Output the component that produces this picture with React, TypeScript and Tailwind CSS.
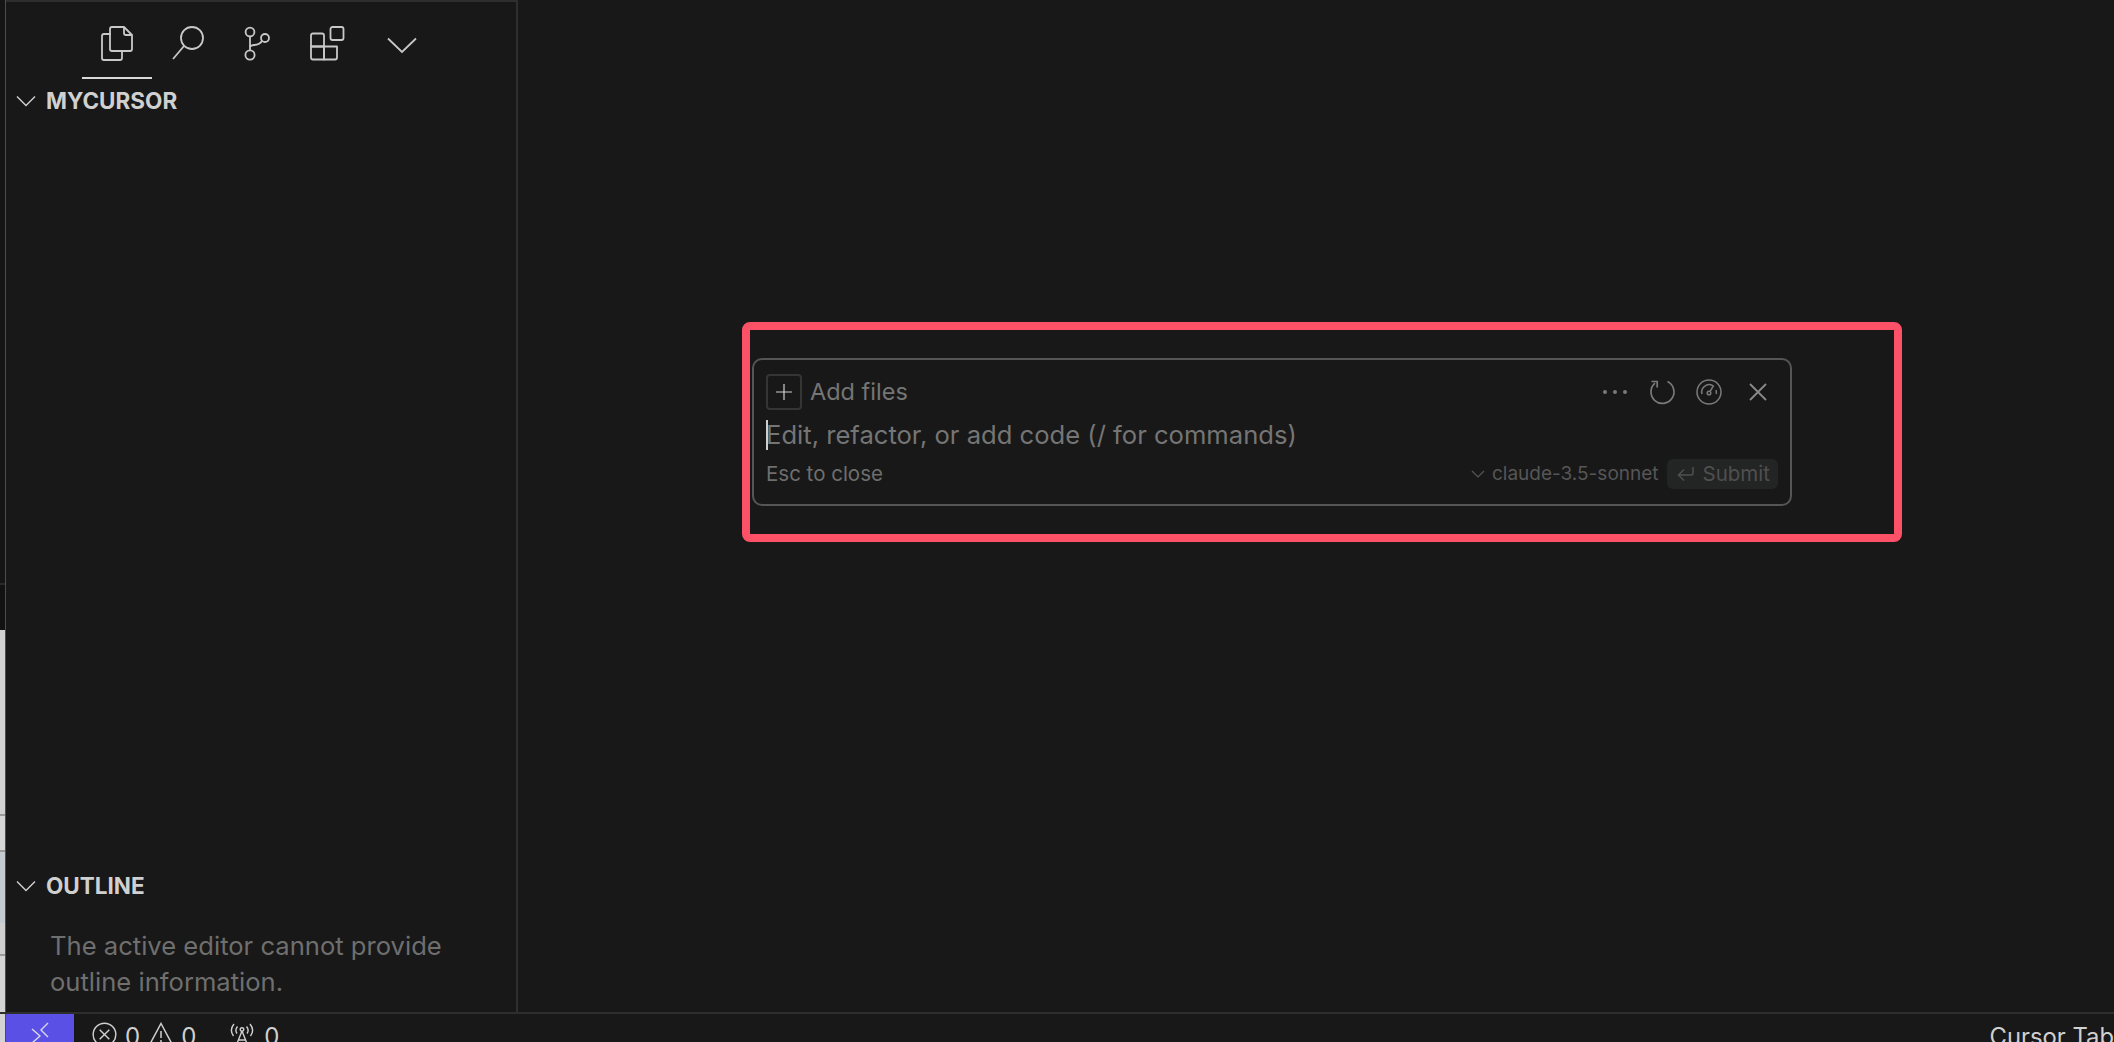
import React from "react";

const font = { fontFamily: 'Inter, "Liberation Sans", sans-serif' };

function Chevron({ className = "" }: { className?: string }) {
  return (
    <svg width="20" height="12" viewBox="0 0 20 12" fill="none" stroke="currentColor" strokeWidth="1.4" className={className}>
      <path d="M1 1.5 L10 10.5 L19 1.5" />
    </svg>
  );
}

function FilesIcon() {
  return (
    <svg width="32" height="36" viewBox="0 0 32 36" fill="none" stroke="#c8c8c8" strokeWidth="1.8" strokeLinejoin="round">
      <path d="M10 8 H3 Q1 8 1 10 V32 Q1 34 3 34 H19 Q21 34 21 32 V26" />
      <path d="M11 1 H23 L31 9 V23 Q31 25 29 25 H11 Q9 25 9 23 V3 Q9 1 11 1 Z" />
      <path d="M23 1 V7 Q23 9 25 9 H31" />
    </svg>
  );
}

function SearchIcon() {
  return (
    <svg width="32" height="34" viewBox="0 0 32 34" fill="none" stroke="#c8c8c8" strokeWidth="1.8">
      <circle cx="20" cy="12" r="11" />
      <path d="M12 20 L1 33" />
    </svg>
  );
}

function BranchIcon() {
  return (
    <svg width="26" height="35" viewBox="0 0 26 35" fill="none" stroke="#c8c8c8" strokeWidth="1.8">
      <circle cx="6" cy="6" r="4.4" />
      <circle cx="6" cy="29" r="4.6" />
      <circle cx="21" cy="12" r="4" />
      <path d="M6 10.5 V24.5" />
      <path d="M6 21 Q6 19.5 10 19 Q16 18.5 18 15" />
    </svg>
  );
}

function ExtensionsIcon() {
  return (
    <svg width="35" height="35" viewBox="0 0 35 35" fill="none" stroke="#c8c8c8" strokeWidth="1.8" strokeLinejoin="round">
      <rect x="20.5" y="1" width="13" height="13" rx="2" />
      <path d="M3 7.5 H12 Q14 7.5 14 9.5 V20.5 H1 V9.5 Q1 7.5 3 7.5 Z" />
      <path d="M1 20.5 H14 V33.5 H3 Q1 33.5 1 31.5 Z" />
      <path d="M14 20.5 H27 V31.5 Q27 33.5 25 33.5 H14 Z" />
    </svg>
  );
}

function Refresh() {
  return (
    <svg width="26" height="26" viewBox="0 0 26 26" fill="none" stroke="#7a7a7a" strokeWidth="1.7">
      <path d="M17.5 2.6 A11.5 11.5 0 1 1 5 4.2" />
      <path d="M1.5 2.5 H7.2 V8.5" />
    </svg>
  );
}

function Gauge() {
  return (
    <svg width="26" height="26" viewBox="0 0 26 26" fill="none" stroke="#7a7a7a" strokeWidth="1.5">
      <circle cx="13" cy="13" r="12" />
      <path d="M6 15 A7.4 7.4 0 0 1 18 7.5" />
      <path d="M20 11 A7.4 7.4 0 0 1 20.2 15" />
      <circle cx="13" cy="14" r="1.8" />
      <path d="M14 12.5 L17 7.5" />
    </svg>
  );
}

export default function App() {
  return (
    <div className="flex h-[1042px] w-[2114px] flex-col overflow-hidden bg-[#181818]" style={font}>
      <div className="flex min-h-0 flex-1">
        <div className="flex w-[6px] shrink-0 flex-col border-r border-[#4d4d4d]">
          <div className="h-[583px] bg-[#151515]" />
          <div className="h-[2px] bg-[#2a2a2a]" />
          <div className="h-[45px] bg-[#121212]" />
          <div className="h-[184px] bg-[#d2d2d2]" />
          <div className="h-[2px] bg-[#9a9a9a]" />
          <div className="h-[34px] bg-[#d6d6d6]" />
          <div className="h-[2px] bg-[#9a9a9a]" />
          <div className="h-[71px] bg-[#c5c9d0]" />
          <div className="h-[31px] bg-[#cfcfcf]" />
          <div className="h-[2px] bg-[#9a9a9a]" />
          <div className="flex-1 bg-[#d4d4d4]" />
        </div>

        <aside className="flex w-[512px] shrink-0 flex-col border-t-2 border-r-2 border-[#2e2e2e]">
          <div className="flex h-[77px] pt-[24px] pl-[76px]">
            <div className="flex h-[53px] w-[70px] justify-center border-b-2 border-[#d8d8d8]">
              <FilesIcon />
            </div>
            <div className="ml-[20px]"><SearchIcon /></div>
            <div className="ml-[40px]"><BranchIcon /></div>
            <div className="ml-[40px]"><ExtensionsIcon /></div>
            <div className="ml-[42px] mt-[11px] text-[#c8c8c8]">
              <svg width="30" height="17" viewBox="0 0 30 17" fill="none" stroke="currentColor" strokeWidth="1.8"><path d="M1 1.5 L15 15 L29 1.5" /></svg>
            </div>
          </div>
          <div className="mt-[10px] flex h-[24px] items-center pl-[10px] text-[#d0d0d0]">
            <Chevron />
            <span className="ml-[10px] text-[22.5px] font-bold">MYCURSOR</span>
          </div>
          <div className="flex-1" />
          <div className="flex h-[24px] items-center pl-[10px] text-[#d0d0d0]">
            <Chevron />
            <span className="ml-[10px] text-[22.5px] font-bold">OUTLINE</span>
          </div>
          <p className="mt-[30px] mb-[12px] pl-[44px] text-[25.6px] leading-[36px] whitespace-nowrap text-[#6f6f6f]">
            The active editor cannot provide<br />outline information.
          </p>
        </aside>

        <main className="min-w-0 flex-1 pt-[322px] pl-[224px]">
          <div className="h-[220px] w-[1160px] rounded-[8px] border-[8px] border-[#fd5167] pt-[28px] pl-[2px]">
            <div className="flex h-[148px] w-[1040px] flex-col rounded-[10px] border-2 border-[#555555] bg-[#181818] px-[12px] pt-[14px]">
              <div className="flex h-[36px] items-center">
                <div className="flex h-[36px] w-[36px] items-center justify-center rounded-[4px] border-2 border-[#353535]">
                  <svg width="18" height="18" viewBox="0 0 18 18" stroke="#d0d0d0" strokeWidth="1.2"><path d="M9 1 V17 M1 9 H17" /></svg>
                </div>
                <span className="ml-[8px] text-[23.5px] text-[#757575]">Add files</span>
                <div className="ml-auto flex items-center">
                  <svg width="26" height="6" viewBox="0 0 26 6" fill="#7a7a7a"><circle cx="3" cy="3" r="2" /><circle cx="13" cy="3" r="2" /><circle cx="23" cy="3" r="2" /></svg>
                  <div className="ml-[22px]"><Refresh /></div>
                  <div className="ml-[20px]"><Gauge /></div>
                  <svg className="ml-[27px] mr-[11px]" width="18" height="18" viewBox="0 0 18 18" stroke="#8a8a8a" strokeWidth="1.8"><path d="M1 1 L17 17 M17 1 L1 17" /></svg>
                </div>
              </div>
              <div className="relative mt-[10px] h-[30px] text-[25.6px] leading-[30px] whitespace-nowrap text-[#757575]">
                <span className="absolute top-0 left-0 h-[30px] w-[2px] bg-[#cfcfcf]" />
                Edit, refactor, or add code (/ for commands)
              </div>
              <div className="mt-[9px] flex h-[30px] items-center text-[20.5px]">
                <span className="text-[#6e6e6e]">Esc to close</span>
                <div className="ml-auto flex items-center text-[#565656]">
                  <svg width="14" height="8" viewBox="0 0 14 8" fill="none" stroke="#565656" strokeWidth="1.2"><path d="M1 1 L7 7 L13 1" /></svg>
                  <span className="ml-[7px] text-[19px]">claude-3.5-sonnet</span>
                  <div className="ml-[8px] flex h-[30px] items-center rounded-[6px] bg-[#232424] pr-[8px] pl-[10px] text-[#4f4f4f]">
                    <svg width="18" height="16" viewBox="0 0 18 16" fill="none" stroke="#4f4f4f" strokeWidth="1.5"><path d="M16 1 V7 Q16 9 14 9 H2 M7 3.5 L1.5 9 L7 14.5" /></svg>
                    <span className="ml-[8px]">Submit</span>
                  </div>
                </div>
              </div>
            </div>
          </div>
        </main>
      </div>

      <footer className="flex h-[30px] shrink-0 border-t-2 border-[#2e2e2e] bg-[#181818] text-[#d0d0d0]">
        <div className="w-[6px] shrink-0 border-r border-[#4d4d4d] bg-[#d4d4d4]" />
        <div className="flex w-[68px] shrink-0 justify-center bg-[#5b50e6] pt-[8px]">
          <svg width="20" height="22" viewBox="0 0 20 22" fill="none" stroke="#d8d8e8" strokeWidth="1.4"><path d="M18 1 L11 8 L18 15 M2 7 L10 14 L2 21" /></svg>
        </div>
        <div className="flex h-[40px] items-start pt-[8px] text-[24px] leading-[30px]">
          <svg className="ml-[18px]" width="25" height="25" viewBox="0 0 26 26" fill="none" stroke="#d0d0d0" strokeWidth="1.5"><circle cx="13" cy="13" r="11.8" /><path d="M8 8 L18 18 M18 8 L8 18" /></svg>
          <span className="ml-[8px]">0</span>
          <svg className="ml-[9px]" width="24" height="24" viewBox="0 0 24 24" fill="none" stroke="#d0d0d0" strokeWidth="1.5"><path d="M12 1.5 L23 22 H1 Z M12 9 V16 M12 18 V20" /></svg>
          <span className="ml-[8px]">0</span>
          <svg className="ml-[34px]" width="24" height="24" viewBox="0 0 24 24" fill="none" stroke="#d0d0d0" strokeWidth="1.4"><path d="M4 2 Q-1 8 3.5 14 M20 2 Q25 8 20.5 14 M7.5 4.5 Q4.5 8 7 11.5 M16.5 4.5 Q19.5 8 17 11.5 M12 9 L6 24 M12 9 L18 24 M8 18 H16" /><circle cx="12" cy="7.5" r="1.8" /></svg>
          <span className="ml-[10px]">0</span>
        </div>
        <div className="ml-auto h-[40px] pt-[8px] text-[23.8px] leading-[30px] whitespace-nowrap">Cursor Tab</div>
      </footer>
    </div>
  );
}
